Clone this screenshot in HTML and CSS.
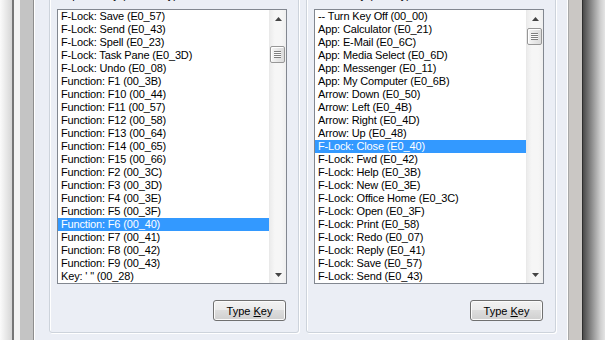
FILE: index.html
```html
<!DOCTYPE html>
<html>
<head>
<meta charset="utf-8">
<title>Add New Key Mapping</title>
<link rel="stylesheet" href="styles.css">
</head>
<body>
<div class="screen">
  <div class="shade-l"></div>
  <div class="edge-l"></div>
  <div class="frame-gap"></div>
  <div class="band"></div>
  <div class="band-line"></div>
  <div class="panel">
    <section class="group">
      <span class="group-title">Map this key (From Key):</span>
      <div class="listbox">
        <ul class="items">
          <li>F-Lock: Save (E0_57)</li>
          <li>F-Lock: Send (E0_43)</li>
          <li>F-Lock: Spell (E0_23)</li>
          <li>F-Lock: Task Pane (E0_3D)</li>
          <li>F-Lock: Undo (E0_08)</li>
          <li>Function: F1 (00_3B)</li>
          <li>Function: F10 (00_44)</li>
          <li>Function: F11 (00_57)</li>
          <li>Function: F12 (00_58)</li>
          <li>Function: F13 (00_64)</li>
          <li>Function: F14 (00_65)</li>
          <li>Function: F15 (00_66)</li>
          <li>Function: F2 (00_3C)</li>
          <li>Function: F3 (00_3D)</li>
          <li>Function: F4 (00_3E)</li>
          <li>Function: F5 (00_3F)</li>
          <li class="sel">Function: F6 (00_40)</li>
          <li>Function: F7 (00_41)</li>
          <li>Function: F8 (00_42)</li>
          <li>Function: F9 (00_43)</li>
          <li>Key: ' " (00_28)</li>
        </ul>
        <div class="scrollbar">
          <div class="sb-btn"><svg width="7" height="4" viewBox="0 0 7 4"><polygon points="0,4 3.5,0 7,4" fill="#444"/></svg></div>
          <div class="sb-track"><div class="thumb" style="margin-top:19px"><span class="grip"></span></div></div>
          <div class="sb-btn"><svg width="7" height="4" viewBox="0 0 7 4"><polygon points="0,0 7,0 3.5,4" fill="#444"/></svg></div>
        </div>
      </div>
      <div class="actions"><button class="btn">Type <u>K</u>ey</button></div>
    </section>
    <section class="group">
      <span class="group-title">To this key (To Key):</span>
      <div class="listbox">
        <ul class="items">
          <li>-- Turn Key Off (00_00)</li>
          <li>App: Calculator (E0_21)</li>
          <li>App: E-Mail (E0_6C)</li>
          <li>App: Media Select (E0_6D)</li>
          <li>App: Messenger (E0_11)</li>
          <li>App: My Computer (E0_6B)</li>
          <li>Arrow: Down (E0_50)</li>
          <li>Arrow: Left (E0_4B)</li>
          <li>Arrow: Right (E0_4D)</li>
          <li>Arrow: Up (E0_48)</li>
          <li class="sel">F-Lock: Close (E0_40)</li>
          <li>F-Lock: Fwd (E0_42)</li>
          <li>F-Lock: Help (E0_3B)</li>
          <li>F-Lock: New (E0_3E)</li>
          <li>F-Lock: Office Home (E0_3C)</li>
          <li>F-Lock: Open (E0_3F)</li>
          <li>F-Lock: Print (E0_58)</li>
          <li>F-Lock: Redo (E0_07)</li>
          <li>F-Lock: Reply (E0_41)</li>
          <li>F-Lock: Save (E0_57)</li>
          <li>F-Lock: Send (E0_43)</li>
        </ul>
        <div class="scrollbar">
          <div class="sb-btn"><svg width="7" height="4" viewBox="0 0 7 4"><polygon points="0,4 3.5,0 7,4" fill="#444"/></svg></div>
          <div class="sb-track"><div class="thumb" style="margin-top:1px"><span class="grip"></span></div></div>
          <div class="sb-btn"><svg width="7" height="4" viewBox="0 0 7 4"><polygon points="0,0 7,0 3.5,4" fill="#444"/></svg></div>
        </div>
      </div>
      <div class="actions"><button class="btn">Type <u>K</u>ey</button></div>
    </section>
  </div>
  <div class="band-line-r"></div>
  <div class="band-r"></div>
  <div class="edge-r"></div>
  <div class="shade-r"></div>
</div>
</body>
</html>
```

FILE: styles.css
```css
* { box-sizing: border-box; }
html, body { margin: 0; padding: 0; }
body {
  width: 605px;
  height: 340px;
  overflow: hidden;
  font-family: "Liberation Sans", Arial, sans-serif;
  font-size: 11px;
  background: #ebeef5;
}
.screen { display: flex; height: 340px; }

.shade-l { width: 12px; background: linear-gradient(to right, #fbfbfb, #d6d6d6); }
.edge-l { width: 2px; background: #767676; }
.frame-gap { width: 6px; background: #f4f4f4; }
.band { width: 13px; background: #c4c4c4; }
.band-line { width: 1px; background: #8e8e8e; }

.band-line-r { width: 1px; background: #a9a9a9; }
.band-r { width: 13px; background: #cac7c4; }
.edge-r { width: 1px; background: #2e2e2e; }
.shade-r { width: 22px; background: linear-gradient(to right, #4a4a4a, #858585 35%, #cfcfcf 80%, #e4e4e4); }

.panel {
  flex: 1;
  display: flex;
  align-items: flex-start;
  gap: 7px;
  padding: 0 12px 0 15px;
  background: #ebeef5;
  box-shadow: inset 1px 0 #fff, inset -1px 0 #fff;
}

.group {
  position: relative;
  width: 250px;
  height: 339px;
  margin-top: -6px;
  padding: 14px 11px 11px 7px;
  display: flex;
  flex-direction: column;
  border: 1px solid #cdd3db;
  border-radius: 3px;
  box-shadow: inset 1px 1px #fff, 1px 1px #fff;
}
.group-title {
  position: absolute;
  top: -6px;
  left: 5px;
  padding: 0 2px;
  line-height: 13px;
  background: #ebeef5;
  color: #000;
  white-space: nowrap;
}

.listbox {
  display: flex;
  height: 275px;
  border: 1px solid #828790;
  background: #fff;
}
.items {
  flex: 1;
  margin: 0;
  padding: 0;
  list-style: none;
  overflow: hidden;
}
.items li {
  height: 13px;
  line-height: 13px;
  padding-left: 3px;
  white-space: nowrap;
  letter-spacing: -0.15px;
  color: #000;
}
.items li.sel { background: #3399ff; color: #fff; }

.scrollbar {
  width: 17px;
  flex: none;
  display: flex;
  flex-direction: column;
  background: linear-gradient(to right, #ececec, #f6f6f6 30%, #f6f6f6 70%, #efefef);
  border-left: 1px solid #e9e9e9;
}
.sb-btn {
  height: 17px;
  flex: none;
  display: flex;
  align-items: center;
  justify-content: center;
}
.sb-track { flex: 1; padding: 0 1px 0 0; }
.thumb {
  height: 17px;
  border: 1px solid #979797;
  border-radius: 2px;
  background: linear-gradient(to right, #f6f6f6, #e7e7e7 50%, #dcdcdc);
  box-shadow: inset 1px 1px #fff;
  display: flex;
  align-items: center;
  justify-content: center;
}
.grip {
  width: 7px;
  height: 7px;
  background: repeating-linear-gradient(to bottom, #7f7f7f 0 1px, #fbfbfb 1px 2px);
}

.actions {
  display: flex;
  justify-content: flex-end;
  margin-top: 16px;
  padding-right: 1px;
}
.btn {
  width: 73px;
  height: 21px;
  padding: 0;
  border: 1px solid #707070;
  border-radius: 3px;
  background: linear-gradient(#f2f2f2, #ebebeb 45%, #dddddd 50%, #cfcfcf);
  box-shadow: inset 0 0 0 1px #fbfbfb;
  font-family: "Liberation Sans", Arial, sans-serif;
  font-size: 11px;
  color: #000;
}
.btn u { text-decoration: underline; }
```
